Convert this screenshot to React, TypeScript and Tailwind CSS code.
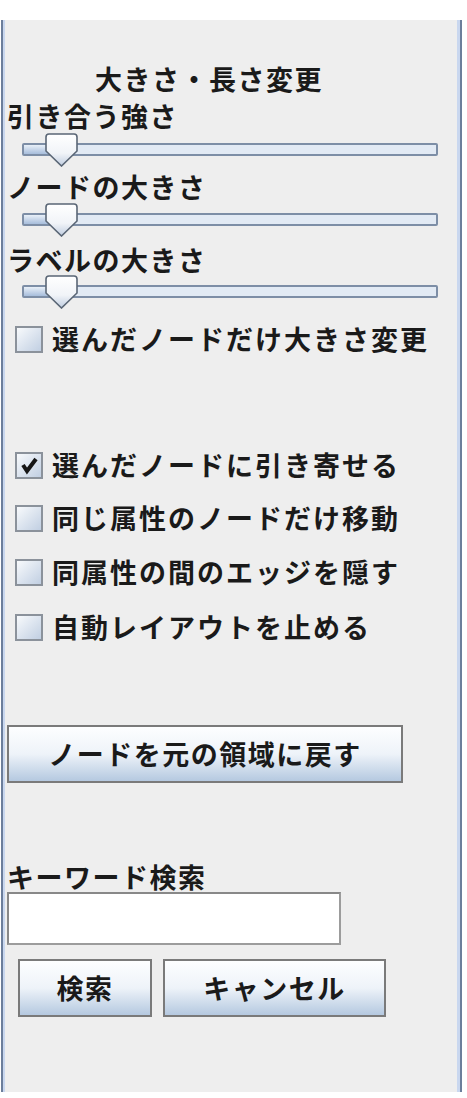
import type { ReactNode } from "react";

const jp = "font-['Noto_Sans_CJK_JP','Noto_Sans_CJK_SC',sans-serif] font-bold text-[#1a1a1a]";

// Swing-style slider: framed track with the thumb resting near the left end.
function Slider({ className = "" }: { className?: string }) {
  return (
    <div className={`relative ml-[19px] h-[34px] w-[416px] ${className}`}>
      <div className="mt-[10px] h-[13px] rounded-[2px] border-2 border-[#7d8ea6] bg-[#e2eaf4]" />
      <div className="absolute left-[2px] top-[12px] h-[9px] w-[28px] bg-gradient-to-b from-[#e9f0f8] to-[#a7bddb]" />
      <svg className="absolute left-[23px] top-0" width="33" height="34" viewBox="0 0 33 34">
        <defs>
          <linearGradient id="thumb" x1="0" y1="0" x2="0" y2="1">
            <stop offset="0" stopColor="#ffffff" />
            <stop offset="0.6" stopColor="#f1f4f8" />
            <stop offset="1" stopColor="#c0cde0" />
          </linearGradient>
        </defs>
        <path d="M4 1 H29 Q32 1 32 4 V18 L16.5 33 L1 18 V4 Q1 1 4 1 Z" fill="url(#thumb)" stroke="#5a6675" strokeWidth="1.6" />
      </svg>
    </div>
  );
}

function CheckRow({ label, checked = false, className = "" }: { label: string; checked?: boolean; className?: string }) {
  return (
    <div className={`flex h-[30px] items-center pl-[12px] ${className}`}>
      <span className="flex h-[27px] w-[28px] shrink-0 items-center justify-center border-2 border-[#8b929b] bg-gradient-to-br from-[#f8fafc] to-[#c1cfe2]">
        {checked && (
          <svg width="20" height="20" viewBox="0 0 20 20">
            <path d="M4 10 L8 16 L17 4" fill="none" stroke="#161616" strokeWidth="4" strokeLinejoin="miter" />
          </svg>
        )}
      </span>
      <span className={`ml-[9px] text-[27px] leading-[30px] tracking-[2px] whitespace-nowrap ${jp}`}>{label}</span>
    </div>
  );
}

function Button({ children, className = "" }: { children: ReactNode; className?: string }) {
  return (
    <div
      className={`flex items-center justify-center border-2 border-[#7a7a7a] bg-gradient-to-b from-[#fdfeff] via-[#eef3f9] to-[#b5c9e0] text-[27px] tracking-[1.5px] whitespace-nowrap ${jp} ${className}`}
    >
      {children}
    </div>
  );
}

function Label({ children, className = "" }: { children: ReactNode; className?: string }) {
  return <div className={`h-[28px] pl-[4px] text-[27px] leading-[28px] tracking-[1.5px] whitespace-nowrap ${jp} ${className}`}>{children}</div>;
}

export default function App() {
  return (
    <div className="h-[1098px] w-[467px] overflow-hidden bg-white pt-[20px]">
      <div className="ml-[1px] flex h-[1072px] w-[461px] flex-col border-x-2 border-[#6c7e9b] bg-[#eeeeee] shadow-[inset_2px_0_0_#c9d7ef,inset_-3px_0_0_#c9d7ef]">
        <Label className="mt-[45px] pl-[92px]">大きさ・長さ変更</Label>
        <Label className="mt-[9px]">引き合う強さ</Label>
        <Slider className="mt-[3px]" />
        <Label className="mt-[6px]">ノードの大きさ</Label>
        <Slider className="mt-[2px]" />
        <Label className="mt-[9px]">ラベルの大きさ</Label>
        <Slider className="mt-[1px]" />

        <CheckRow className="mt-[15px]" label="選んだノードだけ大きさ変更" />
        <CheckRow className="mt-[96px]" label="選んだノードに引き寄せる" checked />
        <CheckRow className="mt-[23px]" label="同じ属性のノードだけ移動" />
        <CheckRow className="mt-[24px]" label="同属性の間のエッジを隠す" />
        <CheckRow className="mt-[25px]" label="自動レイアウトを止める" />

        <Button className="ml-[4px] mt-[83px] h-[58px] w-[396px]">ノードを元の領域に戻す</Button>

        <Label className="mt-[80px]">キーワード検索</Label>
        <div className="ml-[4px] mt-[1px] h-[53px] w-[334px] border-2 border-t-[#888888] border-l-[#888888] border-r-[#9c9c9c] border-b-[#9c9c9c] bg-white" />

        <div className="mt-[14px] flex gap-[11px] pl-[15px]">
          <Button className="h-[58px] w-[134px]">検索</Button>
          <Button className="h-[58px] w-[223px]">キャンセル</Button>
        </div>
      </div>
    </div>
  );
}
